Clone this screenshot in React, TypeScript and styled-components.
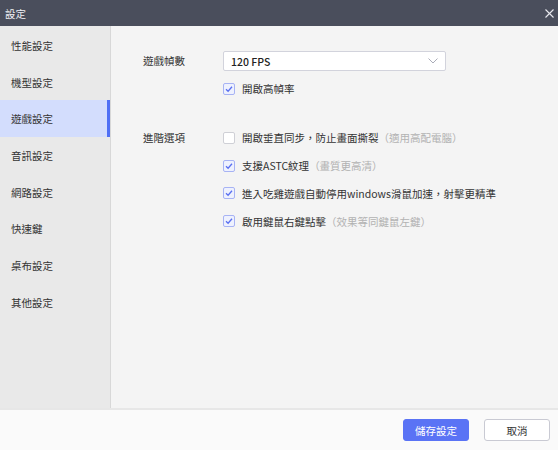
import React, { useState } from 'react';
import styled, { createGlobalStyle } from 'styled-components';

const GlobalStyle = createGlobalStyle`
  html, body {
    margin: 0;
    padding: 0;
    background: #fafafa;
  }
  body {
    font-family: "Noto Sans CJK TC", "Noto Sans", sans-serif;
    font-size: 10.5px;
    color: #333;
    text-spacing-trim: space-all;
  }
`;

const Window = styled.div`
  width: 558px;
  height: 450px;
  display: flex;
  flex-direction: column;
  overflow: hidden;
`;

const TitleBar = styled.div`
  height: 26px;
  flex: 0 0 26px;
  background: #4a4e5c;
  display: flex;
  align-items: center;
  justify-content: space-between;
  padding: 0 3px 0 5px;
  box-sizing: border-box;
  color: #f0f0f4;
  font-size: 10.5px;
`;

const CloseButton = styled.button`
  width: 12px;
  height: 12px;
  padding: 0;
  border: none;
  background: none;
  display: flex;
  align-items: center;
  justify-content: center;
  cursor: pointer;
`;

const Body = styled.div`
  flex: 1;
  display: flex;
  min-height: 0;
`;

const Sidebar = styled.nav`
  width: 110px;
  flex: 0 0 110px;
  background: #e9e9e9;
  border-right: 1px solid #d8d8d8;
  display: flex;
  flex-direction: column;
  padding-top: 1px;
`;

const NavItem = styled.div<{ $active?: boolean }>`
  height: 36.7px;
  display: flex;
  align-items: center;
  padding-left: 11px;
  color: #333;
  background: ${(p) => (p.$active ? '#d3ddfd' : 'transparent')};
  box-shadow: ${(p) => (p.$active ? 'inset -3px 0 0 #4f6ff5' : 'none')};
  cursor: pointer;
`;

const Content = styled.main`
  flex: 1;
  background: #f4f4f4;
  padding: 25px 0 0 32px;
`;

const Section = styled.div`
  display: grid;
  grid-template-columns: 80px 1fr;
  margin-bottom: 29px;
`;

const Label = styled.div`
  color: #333;
  line-height: 20px;
`;

const Controls = styled.div`
  display: flex;
  flex-direction: column;
  gap: 7.8px;
`;

const Select = styled.div`
  width: 223px;
  height: 20px;
  box-sizing: border-box;
  background: #fff;
  border: 1px solid #d2d3dc;
  border-radius: 2px;
  display: flex;
  align-items: center;
  justify-content: space-between;
  padding: 0 7px 0 7px;
  font-weight: 500;
  color: #222;
`;

const CheckRow = styled.label`
  display: flex;
  align-items: center;
  height: 20px;
  gap: 7px;
  cursor: pointer;
  white-space: nowrap;
`;

const Box = styled.span<{ $checked: boolean }>`
  width: 12px;
  height: 12px;
  flex: 0 0 12px;
  box-sizing: border-box;
  border-radius: 2px;
  border: 1px solid ${(p) => (p.$checked ? '#a7b3f4' : '#cfd0d6')};
  background: ${(p) => (p.$checked ? '#eef1fe' : '#fff')};
  display: flex;
  align-items: center;
  justify-content: center;
`;

const Hint = styled.span`
  color: #b2b2b2;
`;

const Footer = styled.footer`
  height: 42px;
  flex: 0 0 42px;
  box-sizing: border-box;
  background: #fafafa;
  border-top: 2px solid #e7e7e7;
  display: flex;
  align-items: center;
  justify-content: flex-end;
  gap: 15px;
  padding: 0 8px 0 0;
`;

const Button = styled.button<{ $primary?: boolean }>`
  width: 66px;
  height: 22px;
  box-sizing: border-box;
  border-radius: 3px;
  font-family: inherit;
  font-size: 10.5px;
  cursor: pointer;
  border: 1px solid ${(p) => (p.$primary ? '#5a73f5' : '#c9cad3')};
  background: ${(p) => (p.$primary ? '#5a73f5' : '#fff')};
  color: ${(p) => (p.$primary ? '#fff' : '#333')};
`;

const Check = ({ checked }: { checked: boolean }) => (
  <Box $checked={checked}>
    {checked && (
      <svg width="8" height="8" viewBox="0 0 8 8">
        <path d="M1 4.2 L3.1 6.2 L7 1.8" fill="none" stroke="#5a70f0" strokeWidth="1.3" />
      </svg>
    )}
  </Box>
);

const navItems = ['性能設定', '機型設定', '遊戲設定', '音訊設定', '網路設定', '快速鍵', '桌布設定', '其他設定'];

export default function App() {
  const [opts, setOpts] = useState({
    highFps: true,
    vsync: false,
    astc: true,
    mouseAccel: true,
    rightClick: true,
  });
  const toggle = (k: keyof typeof opts) => setOpts({ ...opts, [k]: !opts[k] });

  return (
    <>
      <GlobalStyle />
      <Window>
        <TitleBar>
          <span>設定</span>
          <CloseButton>
            <svg width="9" height="9" viewBox="0 0 9 9">
              <path d="M0.5 0.5 L8.5 8.5 M8.5 0.5 L0.5 8.5" stroke="#e8e8ee" strokeWidth="1.1" />
            </svg>
          </CloseButton>
        </TitleBar>
        <Body>
          <Sidebar>
            {navItems.map((n) => (
              <NavItem key={n} $active={n === '遊戲設定'}>
                {n}
              </NavItem>
            ))}
          </Sidebar>
          <Content>
            <Section>
              <Label>遊戲幀數</Label>
              <Controls>
                <Select>
                  <span>120 FPS</span>
                  <svg width="10" height="6" viewBox="0 0 10 6">
                    <path d="M0.5 0.5 L5 5 L9.5 0.5" fill="none" stroke="#a0a3b0" strokeWidth="0.9" />
                  </svg>
                </Select>
                <CheckRow onClick={() => toggle('highFps')}>
                  <Check checked={opts.highFps} />
                  <span>開啟高幀率</span>
                </CheckRow>
              </Controls>
            </Section>
            <Section>
              <Label>進階選項</Label>
              <Controls>
                <CheckRow onClick={() => toggle('vsync')}>
                  <Check checked={opts.vsync} />
                  <span>
                    開啟垂直同步，防止畫面撕裂<Hint>（適用高配電腦）</Hint>
                  </span>
                </CheckRow>
                <CheckRow onClick={() => toggle('astc')}>
                  <Check checked={opts.astc} />
                  <span>
                    支援ASTC紋理<Hint>（畫質更高清）</Hint>
                  </span>
                </CheckRow>
                <CheckRow onClick={() => toggle('mouseAccel')}>
                  <Check checked={opts.mouseAccel} />
                  <span>進入吃雞遊戲自動停用windows滑鼠加速，射擊更精準</span>
                </CheckRow>
                <CheckRow onClick={() => toggle('rightClick')}>
                  <Check checked={opts.rightClick} />
                  <span>
                    啟用鍵鼠右鍵點擊<Hint>（效果等同鍵鼠左鍵）</Hint>
                  </span>
                </CheckRow>
              </Controls>
            </Section>
          </Content>
        </Body>
        <Footer>
          <Button $primary>儲存設定</Button>
          <Button>取消</Button>
        </Footer>
      </Window>
    </>
  );
}
